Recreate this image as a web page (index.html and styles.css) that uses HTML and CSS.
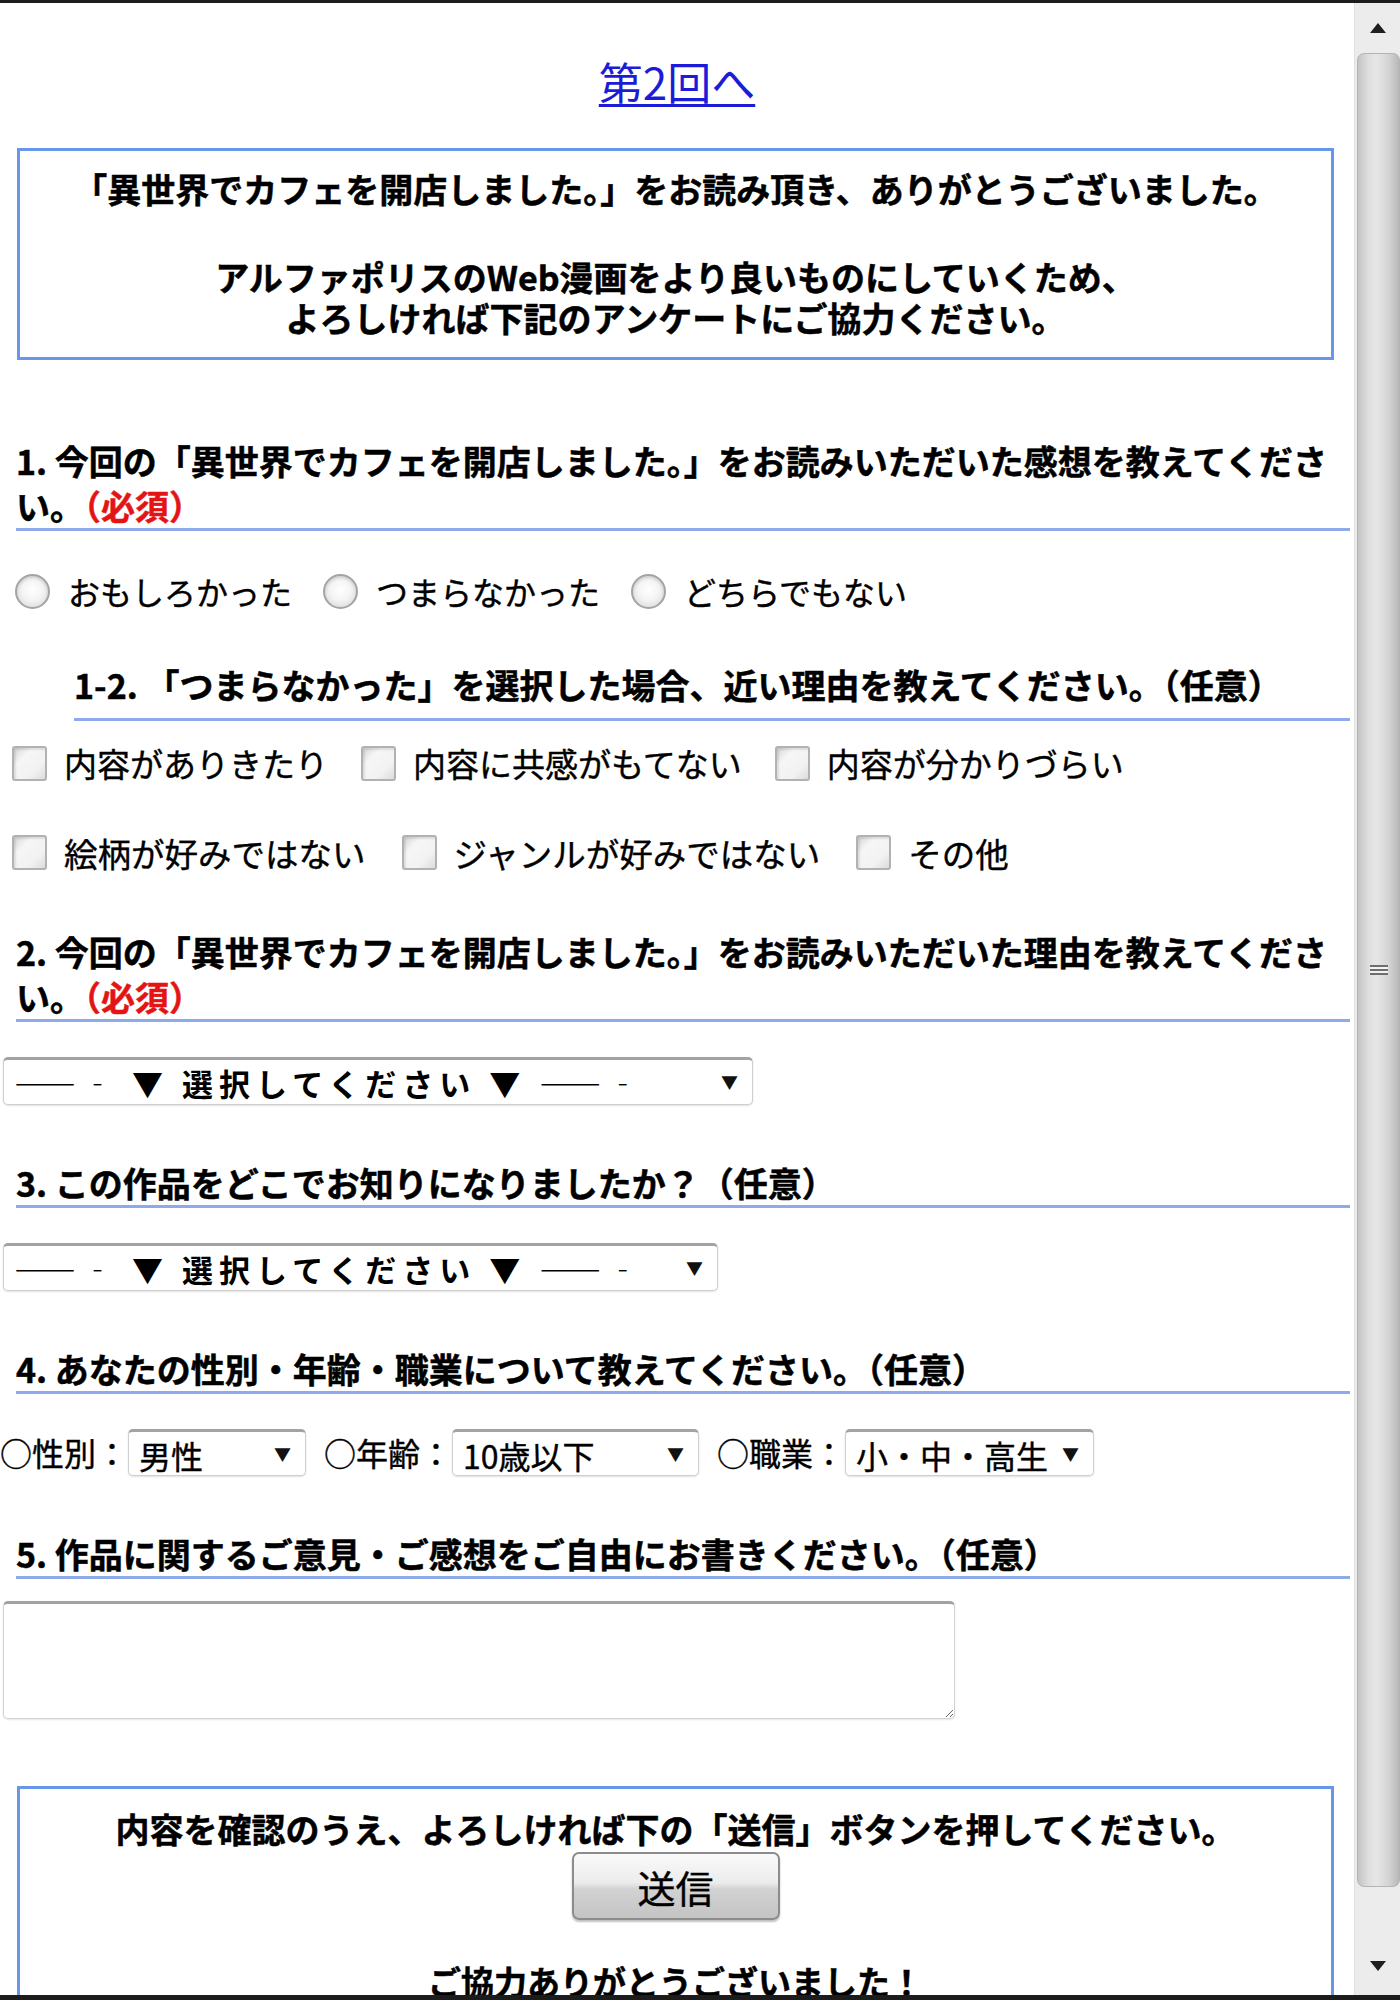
FILE: index.html
```html
<!DOCTYPE html>
<html lang="ja">
<head>
<meta charset="utf-8">
<title>アンケート</title>
<link rel="stylesheet" href="styles.css">
</head>
<body>
<div class="frame">
  <main class="page">
    <p class="prev"><a href="#">第2回へ</a></p>

    <div class="notice">
      <p>「異世界でカフェを開店しました。」をお読み頂き、ありがとうございました。</p>
      <p class="notice-sub">アルファポリスのWeb漫画をより良いものにしていくため、<br>よろしければ下記のアンケートにご協力ください。</p>
    </div>

    <form class="survey">
      <section class="q q-first">
        <h2 class="q-title">1. 今回の「異世界でカフェを開店しました。」をお読みいただいた感想を教えてください。<span class="req">（必須）</span></h2>
        <div class="choices radios">
          <label class="choice"><input type="radio" name="impression">おもしろかった</label>
          <label class="choice"><input type="radio" name="impression">つまらなかった</label>
          <label class="choice"><input type="radio" name="impression">どちらでもない</label>
        </div>

        <h3 class="q-title q-sub">1-2. 「つまらなかった」を選択した場合、近い理由を教えてください。（任意）</h3>
        <div class="choices checks">
          <label class="choice"><input type="checkbox">内容がありきたり</label>
          <label class="choice"><input type="checkbox">内容に共感がもてない</label>
          <label class="choice"><input type="checkbox">内容が分かりづらい</label>
        </div>
        <div class="choices checks checks-second">
          <label class="choice"><input type="checkbox">絵柄が好みではない</label>
          <label class="choice"><input type="checkbox">ジャンルが好みではない</label>
          <label class="choice"><input type="checkbox">その他</label>
        </div>
      </section>

      <section class="q q-two-line">
        <h2 class="q-title">2. 今回の「異世界でカフェを開店しました。」をお読みいただいた理由を教えてください。<span class="req">（必須）</span></h2>
        <div class="select select-wide">
          <select><option>――‐ ▼ 選択してください ▼ ――‐</option></select>
          <span class="arrow">▼</span>
        </div>
      </section>

      <section class="q">
        <h2 class="q-title">3. この作品をどこでお知りになりましたか？（任意）</h2>
        <div class="select select-mid">
          <select><option>――‐ ▼ 選択してください ▼ ――‐</option></select>
          <span class="arrow">▼</span>
        </div>
      </section>

      <section class="q">
        <h2 class="q-title">4. あなたの性別・年齢・職業について教えてください。（任意）</h2>
        <div class="profile">
          <span class="field-label">○性別：</span>
          <div class="select select-sex">
            <select><option>男性</option><option>女性</option></select>
            <span class="arrow">▼</span>
          </div>
          <span class="field-label">○年齢：</span>
          <div class="select select-age">
            <select><option>10歳以下</option></select>
            <span class="arrow">▼</span>
          </div>
          <span class="field-label">○職業：</span>
          <div class="select select-job">
            <select><option>小・中・高生</option></select>
            <span class="arrow">▼</span>
          </div>
        </div>
      </section>

      <section class="q">
        <h2 class="q-title">5. 作品に関するご意見・ご感想をご自由にお書きください。（任意）</h2>
        <textarea class="comment"></textarea>
      </section>

      <div class="notice submit-box">
        <p>内容を確認のうえ、よろしければ下の「送信」ボタンを押してください。</p>
        <button type="button" class="send">送信</button>
        <p class="thanks">ご協力ありがとうございました！</p>
      </div>
    </form>
  </main>

  <div class="scrollbar" aria-hidden="true">
    <div class="sb-btn sb-up"><span class="tri tri-up"></span></div>
    <div class="sb-thumb"><span class="grip"></span></div>
    <div class="sb-btn sb-down"><span class="tri tri-down"></span></div>
  </div>
</div>
</body>
</html>
```

FILE: styles.css
```css
* {
  box-sizing: border-box;
}

html,
body {
  margin: 0;
  padding: 0;
  background: #fff;
}

body {
  font-family: "Noto Sans CJK JP", "Noto Sans", sans-serif;
  color: #000;
}

/* window frame: dark edges top and bottom, page + scrollbar side by side */
.frame {
  display: flex;
  width: 1400px;
  height: 2000px;
  border-top: 3px solid #1c1c1c;
  border-bottom: 5px solid #1c1c1c;
  overflow: hidden;
}

.page {
  flex: 1;
  min-width: 0;
  overflow: hidden;
}

p {
  margin: 0;
}

/* link to previous episode */
.prev {
  margin-top: 53px;
  text-align: center;
  font-size: 44px;
  line-height: 50px;
}

.prev a {
  color: #1c1cd8;
  text-decoration: underline;
  text-decoration-thickness: 3px;
  text-underline-offset: 4px;
}

/* framed message boxes */
.notice {
  margin: 42px 20px 0 17px;
  border: 3px solid #6896e8;
  padding: 16.5px 6px 19.5px;
  text-align: center;
  font-weight: bold;
  font-size: 34px;
  line-height: 41px;
  -webkit-text-stroke: 0.5px #000;
}

.notice-sub {
  margin-top: 47px;
}

/* questions */
.q {
  margin-top: 55px;
}

.q-first {
  margin-top: 77.5px;
}

.q-two-line {
  margin-top: 55.5px;
}

.q-title {
  margin: 0 4px 0 16px;
  font-size: 34px;
  line-height: 45px;
  font-weight: bold;
  border-bottom: 3px solid #8eaaea;
  -webkit-text-stroke: 0.5px #000;
}

.q-title .req {
  color: #e41414;
  -webkit-text-stroke: 0.5px #e41414;
}

.q-sub {
  margin: 49px 4px 0 74px;
  padding-bottom: 11px;
}

/* radio / checkbox rows */
.choices {
  display: flex;
  align-items: center;
  height: 43px;
}

.choice {
  display: inline-flex;
  align-items: center;
  font-size: 32px;
  line-height: 43px;
  -webkit-text-stroke: 0.4px #000;
}

.radios {
  margin-top: 39px;
  padding-left: 15px;
  gap: 31px;
}

.checks {
  margin-top: 21px;
  padding-left: 12px;
  gap: 33px;
}

.checks .choice {
  font-size: 33px;
}

.checks-second {
  margin-top: 46px;
  gap: 36px;
}

.checks-second .choice {
  font-size: 33.5px;
}

.choice input {
  appearance: none;
  -webkit-appearance: none;
  width: 35px;
  height: 35px;
  margin: 0 18px 0 0;
  flex: none;
}

.choice input[type="radio"] {
  border-radius: 50%;
  border: 2px solid #a4a4a4;
  background: radial-gradient(circle at 50% 45%, #ffffff 0%, #f4f4f4 45%, #d2d2d2 100%);
  box-shadow: inset 0 2px 3px rgba(0, 0, 0, 0.12);
}

.choice input[type="checkbox"] {
  margin-right: 17px;
  border-radius: 3px;
  border: 2px solid #b2b2b2;
  background: linear-gradient(135deg, #d6d6d6 0%, #f6f6f6 30%, #f2f2f2 70%, #dcdcdc 100%);
  box-shadow: inset 2px 2px 2px rgba(0, 0, 0, 0.1);
}

/* drop-down selects */
.select {
  display: flex;
  align-items: center;
  height: 48px;
  margin-left: 3px;
  border: 1px solid #cfcfcf;
  border-top: 3px solid #a3a3a3;
  border-radius: 5px;
  background: #fff;
  box-shadow: 0 1px 2px rgba(0, 0, 0, 0.12);
}

.select select {
  appearance: none;
  -webkit-appearance: none;
  flex: 1;
  min-width: 0;
  height: 100%;
  border: 0;
  background: transparent;
  padding: 0 0 0 10px;
  font-family: inherit;
  font-size: 31px;
  font-weight: bold;
  color: #000;
  letter-spacing: 6px;
}

.select .arrow {
  flex: none;
  font-size: 17px;
  margin-right: 14px;
  color: #111;
}

.select-wide {
  width: 750px;
  margin-top: 34.5px;
}

.select-mid {
  width: 715px;
  margin-top: 35px;
}

.profile {
  display: flex;
  align-items: center;
  margin-top: 35px;
}

.field-label {
  font-size: 32px;
  line-height: 47px;
  -webkit-text-stroke: 0.4px #000;
}

.profile .select {
  margin-left: 0;
  height: 47px;
  margin-right: 18px;
}

.profile .select select {
  font-weight: normal;
  font-size: 32px;
  letter-spacing: 0;
  -webkit-text-stroke: 0.4px #000;
}

.select-sex {
  width: 178px;
}

.select-age {
  width: 247px;
}

.select-job {
  width: 249px;
}

/* free comment */
.comment {
  display: block;
  width: 952px;
  height: 118px;
  margin: 22px 0 0 3px;
  border: 1px solid #d2d2d2;
  border-top: 3px solid #a3a3a3;
  border-radius: 5px;
  box-shadow: 0 1px 2px rgba(0, 0, 0, 0.1);
  font-family: inherit;
  font-size: 28px;
}

/* send box */
.submit-box {
  margin-top: 67px;
  padding-top: 18.5px;
  font-size: 34px;
  line-height: 43px;
}

.send {
  display: block;
  width: 208px;
  height: 68px;
  margin: 2px auto 0;
  padding: 0;
  border: 2px solid #8c8c8c;
  border-radius: 7px;
  background: linear-gradient(#fafafa 0%, #ececec 45%, #d2d2d2 55%, #c4c4c4 100%);
  box-shadow: 0 2px 2px rgba(0, 0, 0, 0.25);
  font-family: inherit;
  font-size: 38px;
  color: #000;
  -webkit-text-stroke: 0.4px #000;
}

.thanks {
  margin-top: 40px;
  font-size: 33px;
}

/* scrollbar on the right edge */
.scrollbar {
  flex: none;
  width: 46px;
  display: flex;
  flex-direction: column;
  background: #ececec;
  border-left: 1px solid #e0e0e0;
}

.sb-btn {
  display: flex;
  justify-content: center;
}

.sb-up {
  height: 50px;
  align-items: center;
}

.sb-down {
  flex: 1;
  align-items: flex-end;
  padding-bottom: 24px;
}

.tri {
  width: 0;
  height: 0;
  border-left: 8px solid transparent;
  border-right: 8px solid transparent;
}

.tri-up {
  border-bottom: 10px solid #1e1e1e;
}

.tri-down {
  border-top: 10px solid #1e1e1e;
}

.sb-thumb {
  height: 1834px;
  margin-left: 2px;
  border: 1px solid #b4b4b4;
  border-radius: 7px;
  background: linear-gradient(90deg, #c4c4c4 0%, #dedede 25%, #e6e6e6 45%, #d4d4d4 75%, #b8b8b8 100%);
  display: flex;
  align-items: center;
  justify-content: center;
}

.grip {
  width: 18px;
  height: 10px;
  background: repeating-linear-gradient(#6e6e6e 0 2px, #f2f2f2 2px 4px);
}
```
